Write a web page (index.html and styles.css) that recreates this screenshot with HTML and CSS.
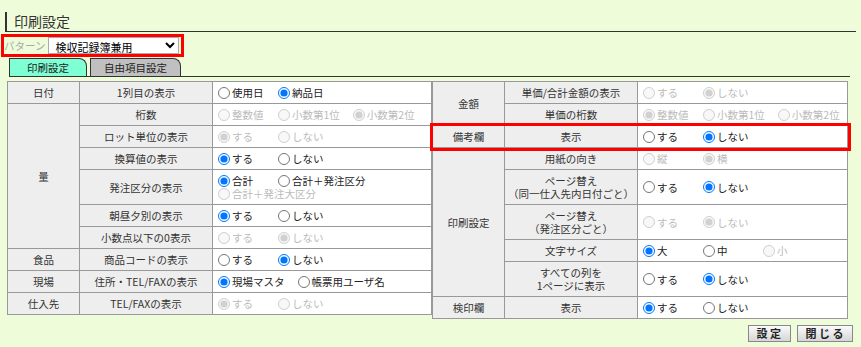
FILE: index.html
```html
<!DOCTYPE html>
<html lang="ja">
<head>
  <meta charset="UTF-8">
  <title>印刷設定</title>
  <link rel="stylesheet" href="styles.css">
</head>
<body>

<h1 class="title">印刷設定</h1>

<div class="pattern">
  <span class="pattern-label">パターン</span>
  <select class="pattern-select">
    <option>検収記録簿兼用</option>
  </select>
</div>

<div class="tabs">
  <div class="tab active">印刷設定</div>
  <div class="tab">自由項目設定</div>
</div>

<div class="tables">
  <table class="grid left">
    <colgroup><col class="c1"><col class="c2"><col></colgroup>
    <tr>
      <th>日付</th><th>1列目の表示</th>
      <td>
        <label class="opt"><input type="radio" name="l1">使用日</label><label class="opt"><input type="radio" name="l1" checked>納品日</label>
      </td>
    </tr>
    <tr>
      <th rowspan="6">量</th><th>桁数</th>
      <td>
        <label class="opt off"><input type="radio" name="l2" disabled>整数値</label><label class="opt off"><input type="radio" name="l2" disabled>小数第1位</label><label class="opt off"><input type="radio" name="l2" disabled checked>小数第2位</label>
      </td>
    </tr>
    <tr>
      <th>ロット単位の表示</th>
      <td>
        <label class="opt off"><input type="radio" name="l3" disabled checked>する</label><label class="opt off"><input type="radio" name="l3" disabled>しない</label>
      </td>
    </tr>
    <tr>
      <th>換算値の表示</th>
      <td>
        <label class="opt"><input type="radio" name="l4" checked>する</label><label class="opt"><input type="radio" name="l4">しない</label>
      </td>
    </tr>
    <tr>
      <th>発注区分の表示</th>
      <td>
        <label class="opt"><input type="radio" name="l5" checked>合計</label><label class="opt"><input type="radio" name="l5">合計＋発注区分</label><br>
        <label class="opt off"><input type="radio" name="l5" disabled>合計＋発注大区分</label>
      </td>
    </tr>
    <tr>
      <th>朝昼夕別の表示</th>
      <td>
        <label class="opt"><input type="radio" name="l6" checked>する</label><label class="opt"><input type="radio" name="l6">しない</label>
      </td>
    </tr>
    <tr>
      <th>小数点以下の0表示</th>
      <td>
        <label class="opt off"><input type="radio" name="l7" disabled>する</label><label class="opt off"><input type="radio" name="l7" disabled checked>しない</label>
      </td>
    </tr>
    <tr>
      <th>食品</th><th>商品コードの表示</th>
      <td>
        <label class="opt"><input type="radio" name="l8">する</label><label class="opt"><input type="radio" name="l8" checked>しない</label>
      </td>
    </tr>
    <tr>
      <th>現場</th><th>住所・TEL/FAXの表示</th>
      <td>
        <label class="opt"><input type="radio" name="l9" checked>現場マスタ</label><label class="opt"><input type="radio" name="l9">帳票用ユーザ名</label>
      </td>
    </tr>
    <tr>
      <th>仕入先</th><th>TEL/FAXの表示</th>
      <td>
        <label class="opt off"><input type="radio" name="l10" disabled checked>する</label><label class="opt off"><input type="radio" name="l10" disabled>しない</label>
      </td>
    </tr>
  </table>

  <table class="grid right">
    <colgroup><col class="c1"><col class="c2"><col></colgroup>
    <tr>
      <th rowspan="2">金額</th><th>単価/合計金額の表示</th>
      <td>
        <label class="opt off"><input type="radio" name="r1" disabled>する</label><label class="opt off"><input type="radio" name="r1" disabled checked>しない</label>
      </td>
    </tr>
    <tr>
      <th>単価の桁数</th>
      <td>
        <label class="opt off"><input type="radio" name="r2" disabled checked>整数値</label><label class="opt off"><input type="radio" name="r2" disabled>小数第1位</label><label class="opt off"><input type="radio" name="r2" disabled>小数第2位</label>
      </td>
    </tr>
    <tr class="highlight">
      <th>備考欄</th><th>表示</th>
      <td>
        <label class="opt"><input type="radio" name="r3">する</label><label class="opt"><input type="radio" name="r3" checked>しない</label>
      </td>
    </tr>
    <tr>
      <th rowspan="5">印刷設定</th><th>用紙の向き</th>
      <td>
        <label class="opt off"><input type="radio" name="r4" disabled>縦</label><label class="opt off"><input type="radio" name="r4" disabled checked>横</label>
      </td>
    </tr>
    <tr>
      <th>ページ替え<br>（同一仕入先内日付ごと）</th>
      <td>
        <label class="opt"><input type="radio" name="r5">する</label><label class="opt"><input type="radio" name="r5" checked>しない</label>
      </td>
    </tr>
    <tr>
      <th>ページ替え<br>（発注区分ごと）</th>
      <td>
        <label class="opt off"><input type="radio" name="r6" disabled>する</label><label class="opt off"><input type="radio" name="r6" disabled checked>しない</label>
      </td>
    </tr>
    <tr>
      <th>文字サイズ</th>
      <td>
        <label class="opt"><input type="radio" name="r7" checked>大</label><label class="opt"><input type="radio" name="r7">中</label><label class="opt off"><input type="radio" name="r7" disabled>小</label>
      </td>
    </tr>
    <tr>
      <th>すべての列を<br>1ページに表示</th>
      <td>
        <label class="opt"><input type="radio" name="r8">する</label><label class="opt"><input type="radio" name="r8" checked>しない</label>
      </td>
    </tr>
    <tr>
      <th>検印欄</th><th>表示</th>
      <td>
        <label class="opt"><input type="radio" name="r9" checked>する</label><label class="opt"><input type="radio" name="r9">しない</label>
      </td>
    </tr>
  </table>
</div>

<div class="actions">
  <button type="button">設定</button>
  <button type="button">閉じる</button>
</div>

</body>
</html>
```

FILE: styles.css
```css
* {
  box-sizing: border-box;
}

body {
  margin: 0;
  background: #eefcda;
  font-family: "Noto Sans CJK JP", "Noto Sans", sans-serif;
  font-size: 10.5px;
  color: #333;
}

.title {
  margin: 12px 5px 0;
  padding-left: 7px;
  border-left: 2px solid #333;
  border-bottom: 1px solid #333;
  font-size: 14px;
  font-weight: normal;
  line-height: 19px;
  color: #333;
}

/* pattern selector */
.pattern {
  display: inline-flex;
  align-items: center;
  margin: 2px 0 0 1px;
  border: 3px solid #ff0000;
}

.pattern-label {
  color: #aaa;
  margin-right: 3px;
}

.pattern-select {
  width: 131px;
  height: 17px;
  margin-right: 2px;
  padding: 0 2px;
  border: 1px solid #aaa;
  border-radius: 0;
  background: #fff;
  font-family: inherit;
  font-size: 11px;
  color: #000;
}

/* tabs */
.tabs {
  display: flex;
  gap: 3px;
  margin: 1px 11px 0 9px;
  border-bottom: 1px solid #333;
}

.tab {
  min-width: 78px;
  height: 18px;
  padding: 0 13px;
  border: 1px solid #333;
  border-bottom: none;
  border-top-right-radius: 8px;
  background: #c0c0c0;
  line-height: 17px;
  text-align: center;
  color: #222;
}

.tab.active {
  background: #7fffd4;
}

/* setting tables */
.tables {
  display: flex;
  align-items: flex-start;
  margin: 4px 0 0 7px;
}

.grid {
  border-collapse: collapse;
  table-layout: fixed;
  background: #fff;
}

.grid.left {
  width: 425px;
}

.grid.right {
  width: 416px;
}

.grid col.c1 {
  width: 72px;
}

.grid col.c2 {
  width: 133px;
}

.grid th,
.grid td {
  border: 1px solid #999;
  padding: 4px 5px;
  line-height: 13px;
}

.grid th {
  padding: 4px 1px;
  background: #eee;
  font-weight: normal;
  text-align: center;
  white-space: nowrap;
  color: #333;
}

.grid td {
  white-space: nowrap;
  color: #222;
}

.grid tr.highlight {
  outline: 3px solid #ff0000;
}

.opt {
  display: inline-block;
  min-width: 47px;
  margin-right: 13px;
}

.opt.off {
  color: #bbb;
}

.opt input {
  width: 12px;
  height: 12px;
  margin: 0 2px 0 0;
  vertical-align: -1.5px;
}

/* buttons */
.actions {
  display: flex;
  justify-content: flex-end;
  gap: 6px;
  margin: 6px 8px 0 0;
}

.actions button {
  height: 17px;
  padding: 0 6px 0 8px;
  border: 1px solid #888;
  background: linear-gradient(#fafafa, #d6d6d6);
  font-family: inherit;
  font-size: 11px;
  font-weight: bold;
  letter-spacing: 2.5px;
  line-height: 15px;
  color: #222;
}
```
